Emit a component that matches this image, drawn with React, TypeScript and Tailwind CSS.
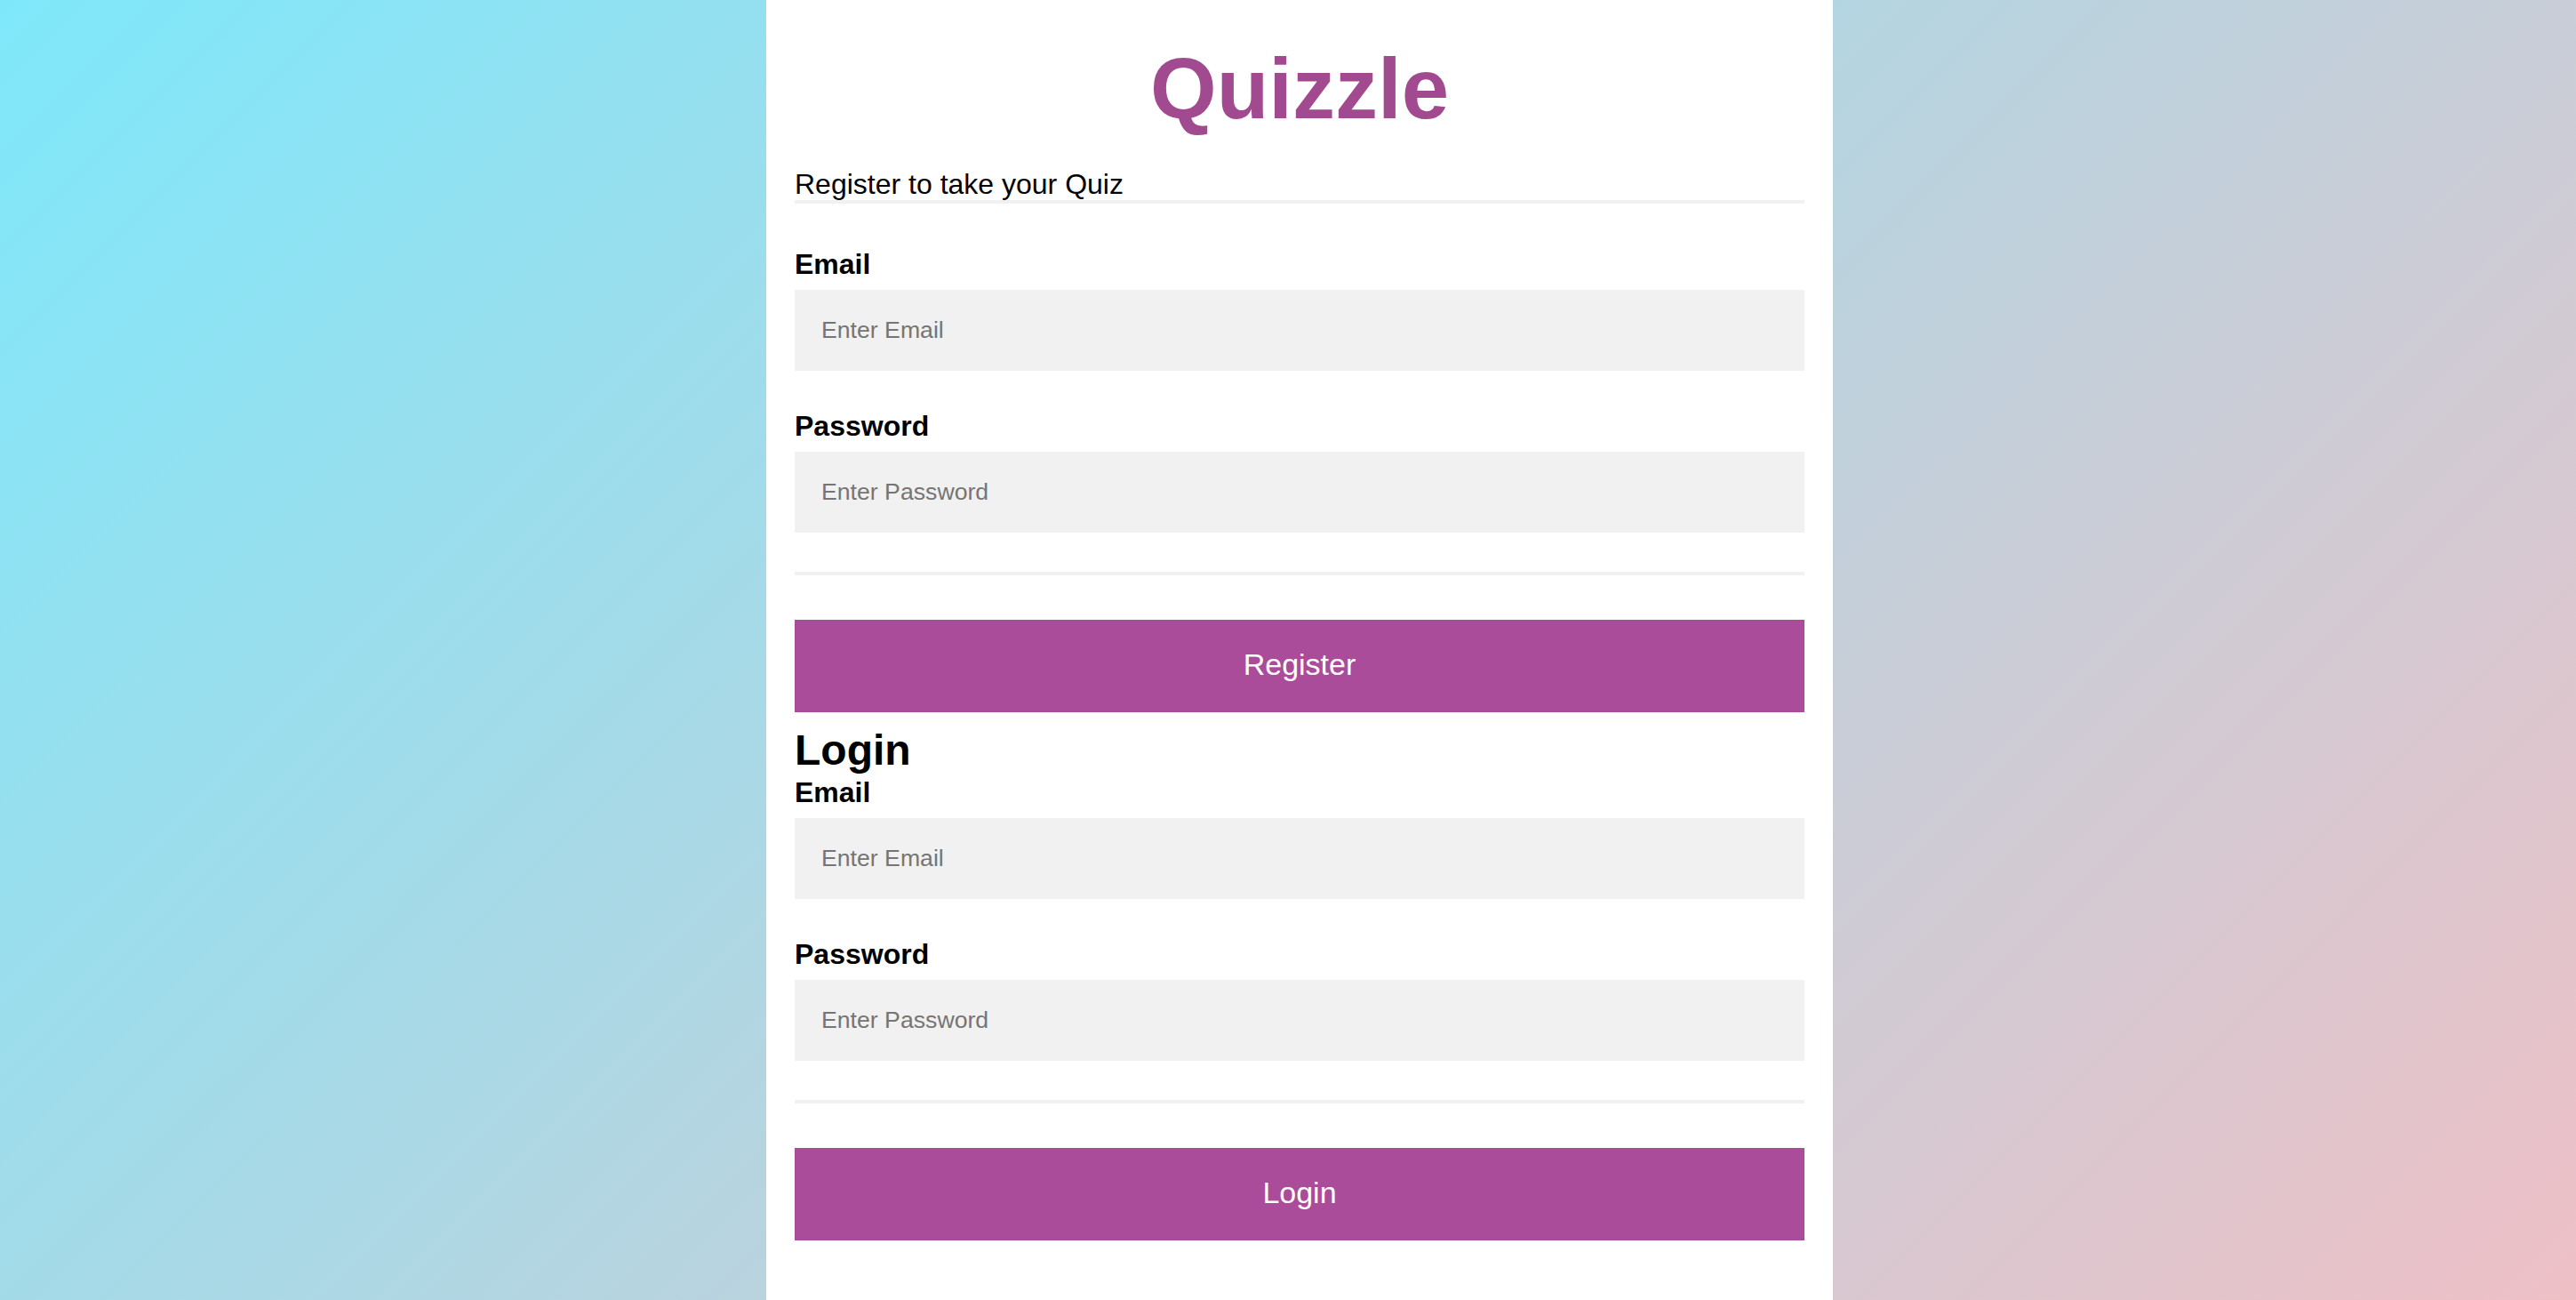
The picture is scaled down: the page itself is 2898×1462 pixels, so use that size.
import React from "react";

function Field({ label, type, placeholder }: { label: string; type: string; placeholder: string }) {
  return (
    <>
      <label className="block text-[32px] leading-[37px] font-bold text-black">{label}</label>
      <input
        type={type}
        placeholder={placeholder}
        className="mt-[10px] mb-[44px] block h-[91px] w-full bg-[#f1f1f1] px-[30px] text-[26.67px] text-black outline-none placeholder:text-[#757575]"
      />
    </>
  );
}

export default function App() {
  return (
    <div
      className="min-h-screen w-full bg-[linear-gradient(135deg,#7ee8fa_0%,#eec0c6_100%)] flex"
      style={{ fontFamily: '"Liberation Sans", Arial, sans-serif' }}
    >
      <div className="ml-[862px] w-[1200px] min-h-screen bg-white px-[32px] pt-[45px] pb-[40px]">
        <h1 className="text-center text-[96px] leading-[110px] font-bold text-[#a24a8f]">Quizzle</h1>
        <div className="mt-[34px] text-[32px] leading-[37px] text-black">Register to take your Quiz</div>
        <div className="-mt-px mb-[50px] h-[4px] bg-[#f1f1f1]" />
        <Field label="Email" type="email" placeholder="Enter Email" />
        <Field label="Password" type="password" placeholder="Enter Password" />
        <div className="mb-[50px] h-[4px] bg-[#f1f1f1]" />
        <button className="block w-full bg-[#aa4c9a] pt-[30px] pb-[34px] text-[34px] leading-[40px] text-white">Register</button>
        <h2 className="mt-[15px] mb-[2px] text-[48px] leading-[55px] font-bold text-black">Login</h2>
        <Field label="Email" type="email" placeholder="Enter Email" />
        <Field label="Password" type="password" placeholder="Enter Password" />
        <div className="mb-[50px] h-[4px] bg-[#f1f1f1]" />
        <button className="block w-full bg-[#aa4c9a] pt-[30px] pb-[34px] text-[34px] leading-[40px] text-white">Login</button>
      </div>
    </div>
  );
}
